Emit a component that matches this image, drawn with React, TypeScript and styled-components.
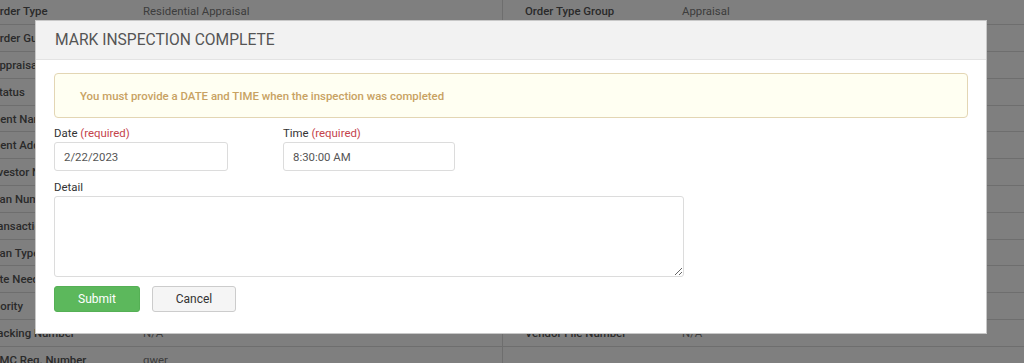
import React from "react";
import styled, { createGlobalStyle } from "styled-components";

const GlobalStyle = createGlobalStyle`
  html, body { margin: 0; padding: 0; background: #fff; overflow: hidden; }
  body { font-family: Roboto, "Liberation Sans", Arial, sans-serif; font-size: 11.4px; color: #333; }
  * { box-sizing: border-box; }
`;

const Page = styled.div`
  display: grid;
  grid-template-columns: 510px 1fr;
  margin: -1.5px 0 0 -8px;
  width: 1040px;
  height: 380px;
  overflow: hidden;
`;

const Half = styled.div<{ $right?: boolean }>`
  display: flex;
  flex-direction: column;
  border-left: ${(p) => (p.$right ? "1px solid #dcdcdc" : "none")};
`;

const Row = styled.div<{ $labelW: number; $pad: number }>`
  display: grid;
  grid-template-columns: ${(p) => p.$labelW}px 1fr;
  height: 26.8px;
  align-items: center;
  border-bottom: 1px solid #dcdcdc;
  padding-left: ${(p) => p.$pad}px;
  white-space: nowrap;
`;

const Label = styled.span<{ $shift?: number }>`
  color: #555;
  font-weight: 500;
  overflow: visible;
  margin-left: ${(p) => p.$shift ?? 0}px;
`;

const Value = styled.span`
  color: #7a7a7a;
`;

const Overlay = styled.div`
  position: fixed;
  inset: 0;
  background: rgba(0, 0, 0, 0.5);
`;

const Modal = styled.div`
  position: fixed;
  left: 35px;
  top: 20px;
  width: 952px;
  background: #fff;
  border: 1px solid #c8c8c8;
  display: flex;
  flex-direction: column;
`;

const Header = styled.div`
  height: 39px;
  background: #f2f2f2;
  border-bottom: 1px solid #e3e3e3;
  display: flex;
  align-items: center;
  padding-left: 19px;
`;

const Title = styled.h3`
  margin: 0;
  font-size: 15.6px;
  font-weight: 400;
  color: #555;
  text-transform: uppercase;
`;

const Body = styled.div`
  padding: 13px 18px 21px 18px;
  display: flex;
  flex-direction: column;
`;

const Alert = styled.div`
  height: 45px;
  background: #fffff2;
  border: 1px solid #e3d6b4;
  border-radius: 4px;
  display: flex;
  align-items: center;
  padding: 1px 25px 0;
  color: #c8a262;
  font-size: 11.4px;
  font-weight: 500;
`;

const FieldRow = styled.div<{ $gap: number }>`
  display: flex;
  margin-top: ${(p) => p.$gap}px;
`;

const Field = styled.div<{ $w?: number }>`
  display: flex;
  flex-direction: column;
  width: ${(p) => (p.$w ? `${p.$w}px` : "auto")};
`;

const FieldLabel = styled.label`
  font-size: 11.4px;
  line-height: 14px;
  color: #333;
  margin-bottom: 2px;
`;

const Required = styled.span`
  color: #c4434b;
`;

const TextInput = styled.input<{ $w: number }>`
  width: ${(p) => p.$w}px;
  height: 29px;
  border: 1px solid #dcdcdc;
  border-radius: 3px;
  padding: 0 9px;
  font-family: Roboto, "Liberation Sans", Arial, sans-serif;
  font-size: 11.4px;
  color: #555;
  outline: none;
`;

const TextArea = styled.textarea`
  width: 630px;
  height: 81px;
  border: 1px solid #dcdcdc;
  border-radius: 3px;
  padding: 6px 9px;
  font-family: Roboto, "Liberation Sans", Arial, sans-serif;
  font-size: 11.4px;
  color: #555;
  outline: none;
`;

const Actions = styled.div`
  display: flex;
  gap: 12px;
  margin-top: 9px;
`;

const Button = styled.button<{ $primary?: boolean; $w: number }>`
  width: ${(p) => p.$w}px;
  height: 26px;
  border-radius: 3px;
  font-family: Roboto, "Liberation Sans", Arial, sans-serif;
  font-size: 12px;
  padding: 0;
  cursor: pointer;
  background: ${(p) => (p.$primary ? "#5cb85c" : "#f5f5f5")};
  border: 1px solid ${(p) => (p.$primary ? "#55b055" : "#cccccc")};
  color: ${(p) => (p.$primary ? "#fff" : "#333")};
`;

const left: [string, string, number][] = [
  ["Order Type", "Residential Appraisal", 0],
  ["Order Guid", "3f2a9c1e-77b4", 0],
  ["Appraisal Type", "1004 URAR", 0],
  ["Status", "Assigned", 0],
  ["Client Name", "Test Client", -5],
  ["Client Address", "123 Main St", -5],
  ["Investor Name", "N/A", -4],
  ["Loan Number", "100234", -5],
  ["Transaction Type", "Purchase", -5],
  ["Loan Type", "Conventional", -5],
  ["Date Needed", "3/1/2023", -6],
  ["Priority", "Normal", -6],
  ["Tracking Number", "N/A", -5],
  ["AMC Reg. Number", "qwer", 0],
];

const right: [string, string][] = [
  ["Order Type Group", "Appraisal"],
  ["Product", "1004"],
  ["Fee", "$450.00"],
  ["Created", "2/20/2023"],
  ["Borrower", "John Doe"],
  ["Property", "Single Family"],
  ["County", "Orange"],
  ["Occupancy", "Owner"],
  ["Lender", "N/A"],
  ["FHA Case", "N/A"],
  ["Due Date", "3/1/2023"],
  ["Vendor", "N/A"],
  ["Vendor File Number", "N/A"],
  ["", ""],
];

export default function App() {
  return (
    <>
      <GlobalStyle />
      <Page>
        <Half>
          {left.map(([l, v, s]) => (
            <Row key={l} $labelW={151} $pad={0}>
              <Label $shift={s}>{l}</Label>
              <Value>{v}</Value>
            </Row>
          ))}
        </Half>
        <Half $right>
          {right.map(([l, v], i) => (
            <Row key={i} $labelW={157} $pad={22}>
              <Label>{l}</Label>
              <Value>{v}</Value>
            </Row>
          ))}
        </Half>
      </Page>
      <Overlay />
      <Modal>
        <Header>
          <Title>Mark Inspection Complete</Title>
        </Header>
        <Body>
          <Alert>You must provide a DATE and TIME when the inspection was completed</Alert>
          <FieldRow $gap={8}>
            <Field $w={229}>
              <FieldLabel>
                Date <Required>(required)</Required>
              </FieldLabel>
              <TextInput $w={174} defaultValue="2/22/2023" />
            </Field>
            <Field>
              <FieldLabel>
                Time <Required>(required)</Required>
              </FieldLabel>
              <TextInput $w={172} defaultValue="8:30:00 AM" />
            </Field>
          </FieldRow>
          <FieldRow $gap={9}>
            <Field>
              <FieldLabel>Detail</FieldLabel>
              <TextArea />
            </Field>
          </FieldRow>
          <Actions>
            <Button $primary $w={86}>Submit</Button>
            <Button $w={84}>Cancel</Button>
          </Actions>
        </Body>
      </Modal>
    </>
  );
}
